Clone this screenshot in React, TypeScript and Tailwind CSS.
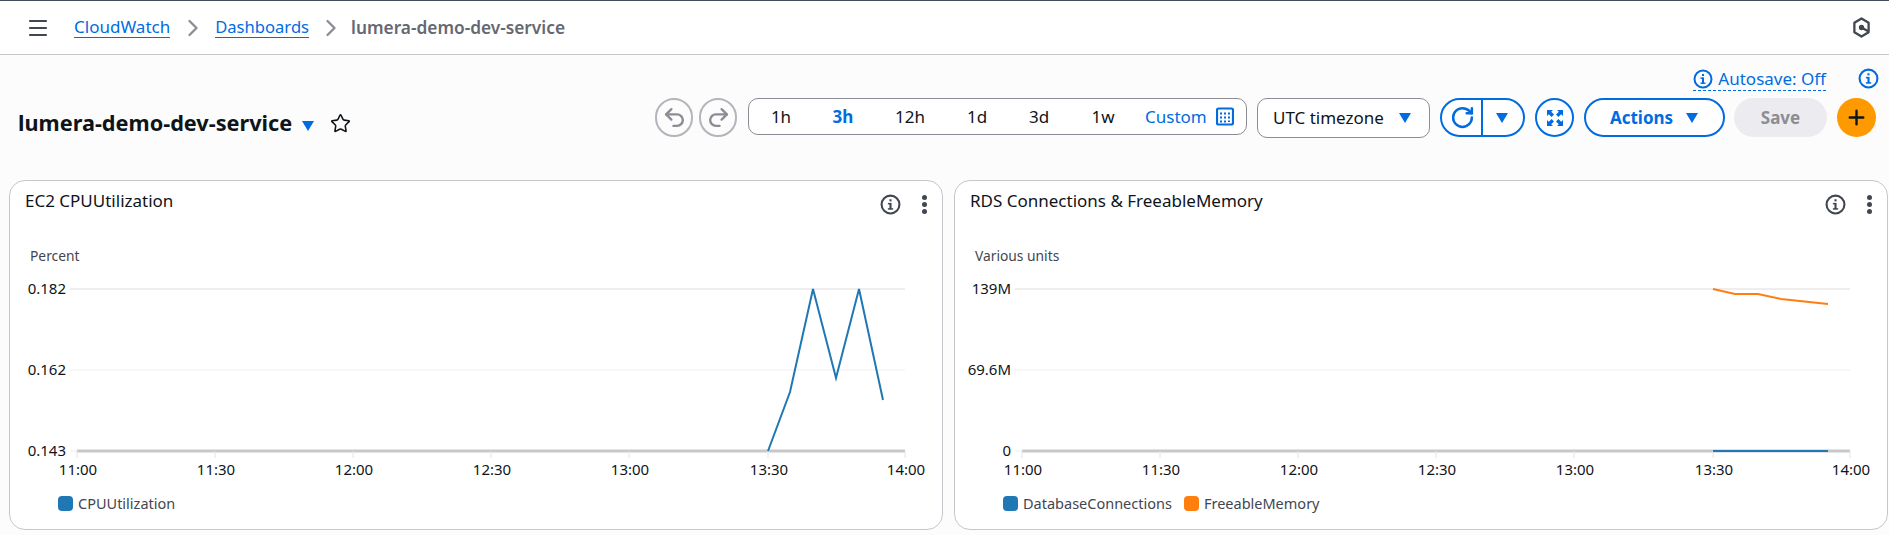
import { ChevronRight, Menu, Plus, Redo2, RotateCw, Star, Undo2 } from "lucide-react";

const Caret = ({ className }: { className: string }) => (
    <svg viewBox="0 0 14 12" className={className}>
        <polygon points="1,1 13,1 7,11" fill="currentColor" />
    </svg>
)

const InfoIcon = ({ className }: { className: string }) => (
    <svg viewBox="0 0 20 20" className={className} fill="none">
        <circle cx="10" cy="10" r="8.5" stroke="currentColor" strokeWidth="2" />
        <rect x="9" y="8.5" width="2" height="6" fill="currentColor" />
        <rect x="7.5" y="13.5" width="5" height="1.4" fill="currentColor" />
        <rect x="7.5" y="8.5" width="3" height="1.4" fill="currentColor" />
        <rect x="9" y="5" width="2" height="2" fill="currentColor" />
    </svg>
)

const ranges = [
    { label: "1h", className: "w-[62px] text-[#0f141a]" },
    { label: "3h", className: "w-[62px] text-[#006ce0] font-bold" },
    { label: "12h", className: "w-[72px] text-[#0f141a]" },
    { label: "1d", className: "w-[62px] text-[#0f141a]" },
    { label: "3d", className: "w-[62px] text-[#0f141a]" },
    { label: "1w", className: "w-[66px] text-[#0f141a]" },
]

type ChartProps = {
    unit: string
    yLabels: string[]
    children: React.ReactNode
}

const ticks = [67, 205, 343, 481, 619, 758, 895]
const times = ["11:00", "11:30", "12:00", "12:30", "13:00", "13:30", "14:00"]
const rowY = [58, 139, 220]

const Chart = ({ unit, yLabels, children }: ChartProps) => (
    <svg width="932" height="250" className="block" style={{ fontFamily: "'Noto Sans', sans-serif" }}>
        <text x="20" y="30" fontSize="13.8" fill="#424650">{unit}</text>
        <line x1="60" x2="895" y1={rowY[0]} y2={rowY[0]} stroke="#eeeeef" strokeWidth="2" />
        <line x1="60" x2="895" y1={rowY[1]} y2={rowY[1]} stroke="#eeeeef" strokeWidth="1" />
        <line x1="60" x2="67" y1={rowY[2]} y2={rowY[2]} stroke="#eeeeef" strokeWidth="1" />
        <line x1="67" x2="895" y1={rowY[2]} y2={rowY[2]} stroke="#c8c8ca" strokeWidth="3" />
        {ticks.map((x) => (
            <line key={x} x1={x} x2={x} y1={rowY[2]} y2={rowY[2] + 7} stroke="#e4e4e6" strokeWidth="1" />
        ))}
        {yLabels.map((label, idx) => (
            <text key={label} x="56" y={rowY[idx] + 5} textAnchor="end" fontSize="15" fill="#0f141a">{label}</text>
        ))}
        {times.map((time, idx) => (
            <text key={time} x={ticks[idx] + 1} y="249" dy="-5" textAnchor="middle" fontSize="15" fill="#0f141a">{time}</text>
        ))}
        {children}
    </svg>
)

const Card = ({ title, chart, legend }: { title: string, chart: React.ReactNode, legend: { name: string, color: string }[] }) => (
    <div className="h-[350px] rounded-[16px] border border-[#c6c6cd] bg-white">
        <div className="flex h-[50px] items-start justify-between pl-[15px] pr-[15px] pt-[8px]">
            <h2 className="text-[17px] leading-[24px] text-[#0f141a]">{title}</h2>
            <div className="flex items-center gap-[20px] pt-[5px] text-[#424650]">
                <InfoIcon className="h-[21px] w-[21px]" />
                <div className="flex h-[19px] w-[6px] flex-col items-center justify-between">
                    <span className="h-[5px] w-[5px] rounded-full bg-[#424650]" />
                    <span className="h-[5px] w-[5px] rounded-full bg-[#424650]" />
                    <span className="h-[5px] w-[5px] rounded-full bg-[#424650]" />
                </div>
            </div>
        </div>
        {chart}
        <div className="mt-[14px] flex items-center pl-[48px] text-[14.5px] leading-[16px] text-[#424650]">
            {legend.map((item) => (
                <div key={item.name} className="mr-[12px] flex items-center gap-[5px]">
                    <span className={`h-[15px] w-[15px] rounded-[4px] ${item.color}`} />
                    <span>{item.name}</span>
                </div>
            ))}
        </div>
    </div>
)

const App = () => {
    return (
        <div className="h-[535px] w-full overflow-hidden bg-[#fcfcfc] font-['Noto_Sans',sans-serif]">
            <header className="flex h-[55px] items-center justify-between border-t border-b border-t-[#414d5c] border-b-[#c6c6cd] bg-white pl-[26px] pr-[18px]">
                <div className="flex items-center text-[17px]">
                    <Menu size={24} strokeWidth={2.2} className="text-[#424650]" />
                    <a className="ml-[24px] border-b border-[#006ce0] leading-[20px] text-[#006ce0]">CloudWatch</a>
                    <ChevronRight size={28} className="ml-[9px] mr-[8px] text-[#8c8c94]" />
                    <a className="border-b border-[#006ce0] text-[16.6px] leading-[20px] text-[#006ce0]">Dashboards</a>
                    <ChevronRight size={28} className="ml-[8px] mr-[6px] text-[#8c8c94]" />
                    <span className="text-[17.3px] font-semibold text-[#656871]">lumera-demo-dev-service</span>
                </div>
                <svg viewBox="0 0 20 22" className="h-[21px] w-[19px] text-[#424650]" fill="none" stroke="currentColor" strokeWidth="2.4">
                    <path d="M10 1.5 17.5 6v10L10 20.5 2.5 16V6Z" strokeLinejoin="round" />
                    <circle cx="10" cy="11" r="1.6" fill="currentColor" />
                    <path d="M10 11 17 15" />
                </svg>
            </header>

            <div className="h-[125px] pr-[10px]">
                <div className="flex h-[36px] items-end justify-end text-[17px] text-[#006ce0]">
                    <div className="flex items-center gap-[5px] border-b border-dashed border-[#006ce0] pb-[1px] leading-[20px]">
                        <InfoIcon className="h-[20px] w-[20px]" />
                        <span>Autosave: Off</span>
                    </div>
                    <InfoIcon className="mb-[2px] ml-[32px] h-[21px] w-[21px]" />
                </div>
                <div className="flex items-start justify-between pl-[18px] pr-[3px] pt-[7px]">
                    <div className="mt-[9px] flex items-center">
                        <h1 className="text-[21.7px] font-bold leading-[32px] text-[#0f141a]">lumera-demo-dev-service</h1>
                        <Caret className="ml-[9px] mt-[5px] h-[12px] w-[14px] text-[#006ce0]" />
                        <Star size={21} strokeWidth={1.8} className="ml-[15px] text-[#0f141a]" />
                    </div>
                    <div className="flex items-start text-[17px]">
                        <div className="flex h-[39px] w-[38px] items-center justify-center rounded-full border-2 border-[#b4b4bb] text-[#8c8c94]">
                            <Undo2 size={25} strokeWidth={2.3} />
                        </div>
                        <div className="ml-[6px] flex h-[39px] w-[38px] items-center justify-center rounded-full border-2 border-[#b4b4bb] text-[#8c8c94]">
                            <Redo2 size={25} strokeWidth={2.3} />
                        </div>
                        <div className="ml-[11px] flex h-[37px] w-[499px] items-center rounded-[10px] border border-[#8c8c94] bg-white pl-[1px]">
                            {ranges.map((range) => (
                                <span key={range.label} className={`text-center ${range.className}`}>{range.label}</span>
                            ))}
                            <span className="ml-[9px] text-[#006ce0]">Custom</span>
                            <svg viewBox="0 0 18 18" className="ml-[9px] h-[19px] w-[18px] text-[#006ce0]">
                                <rect x="1" y="1" width="16" height="16" rx="1.5" fill="none" stroke="currentColor" strokeWidth="2.2" />
                                <path d="M4 5h2v2H4zM8 5h2v2H8zM12 5h2v2h-2zM4 9h2v2H4zM8 9h2v2H8zM12 9h2v2h-2zM4 13h2v2H4zM8 13h2v2H8zM12 13h2v1.5h-2z" fill="currentColor" />
                            </svg>
                        </div>
                        <div className="ml-[10px] flex h-[40px] w-[173px] items-center justify-between rounded-[10px] border border-[#8c8c94] bg-white pl-[15px] pr-[17px] text-[#0f141a]">
                            <span>UTC timezone</span>
                            <Caret className="h-[12px] w-[14px] text-[#006ce0]" />
                        </div>
                        <div className="ml-[10px] flex h-[39px] w-[85px] items-center rounded-full border-2 border-[#006ce0] bg-white text-[#006ce0]">
                            <div className="flex h-full w-[41px] items-center justify-center border-r-2 border-[#006ce0] pl-[2px]">
                                <RotateCw size={25} strokeWidth={2.4} />
                            </div>
                            <div className="flex flex-1 items-center justify-center pr-[2px]">
                                <Caret className="h-[12px] w-[14px]" />
                            </div>
                        </div>
                        <div className="ml-[10px] flex h-[39px] w-[39px] items-center justify-center rounded-full border-2 border-[#006ce0] bg-white text-[#006ce0]">
                            <svg viewBox="0 0 18 18" className="h-[18px] w-[18px]" fill="currentColor">
                                <path d="M1 1h6L5.2 2.8 8 5.6 5.6 8 2.8 5.2 1 7Z" />
                                <path d="M17 1h-6l1.8 1.8L10 5.6 12.4 8l2.8-2.8L17 7Z" />
                                <path d="M1 17h6l-1.8-1.8L8 12.4 5.6 10l-2.8 2.8L1 11Z" />
                                <path d="M17 17h-6l1.8-1.8-2.8-2.8 2.4-2.4 2.8 2.8L17 11Z" />
                            </svg>
                        </div>
                        <div className="ml-[10px] flex h-[39px] w-[141px] items-center justify-center gap-[12px] rounded-full border-2 border-[#006ce0] bg-white font-bold text-[#006ce0]">
                            <span>Actions</span>
                            <Caret className="h-[12px] w-[14px]" />
                        </div>
                        <div className="ml-[9px] flex h-[39px] w-[93px] items-center justify-center rounded-full bg-[#ebebf0] font-bold text-[#8c8c94]">Save</div>
                        <div className="ml-[10px] flex h-[39px] w-[39px] items-center justify-center rounded-full bg-[#ff9900] text-[#0f141a]">
                            <Plus size={23} strokeWidth={2.5} />
                        </div>
                    </div>
                </div>
            </div>

            <div className="grid grid-cols-2 gap-[11px] pl-[9px] pr-px">
                <Card
                    title="EC2 CPUUtilization"
                    legend={[{ name: "CPUUtilization", color: "bg-[#1f77b4]" }]}
                    chart={
                        <Chart unit="Percent" yLabels={["0.182", "0.162", "0.143"]}>
                            <polyline points="758,220 780,161 803,58 826,147 849,58 873,169" fill="none" stroke="#1f77b4" strokeWidth="2" />
                        </Chart>
                    }
                />
                <Card
                    title="RDS Connections & FreeableMemory"
                    legend={[
                        { name: "DatabaseConnections", color: "bg-[#1f77b4]" },
                        { name: "FreeableMemory", color: "bg-[#ff7f0e]" },
                    ]}
                    chart={
                        <Chart unit="Various units" yLabels={["139M", "69.6M", "0"]}>
                            <polyline points="758,58 780,63 803,63 826,68 873,73" fill="none" stroke="#ff7f0e" strokeWidth="2" />
                            <line x1="758" x2="873" y1="220" y2="220" stroke="#1f77b4" strokeWidth="2" />
                        </Chart>
                    }
                />
            </div>
        </div>
    );
}
export default App;
